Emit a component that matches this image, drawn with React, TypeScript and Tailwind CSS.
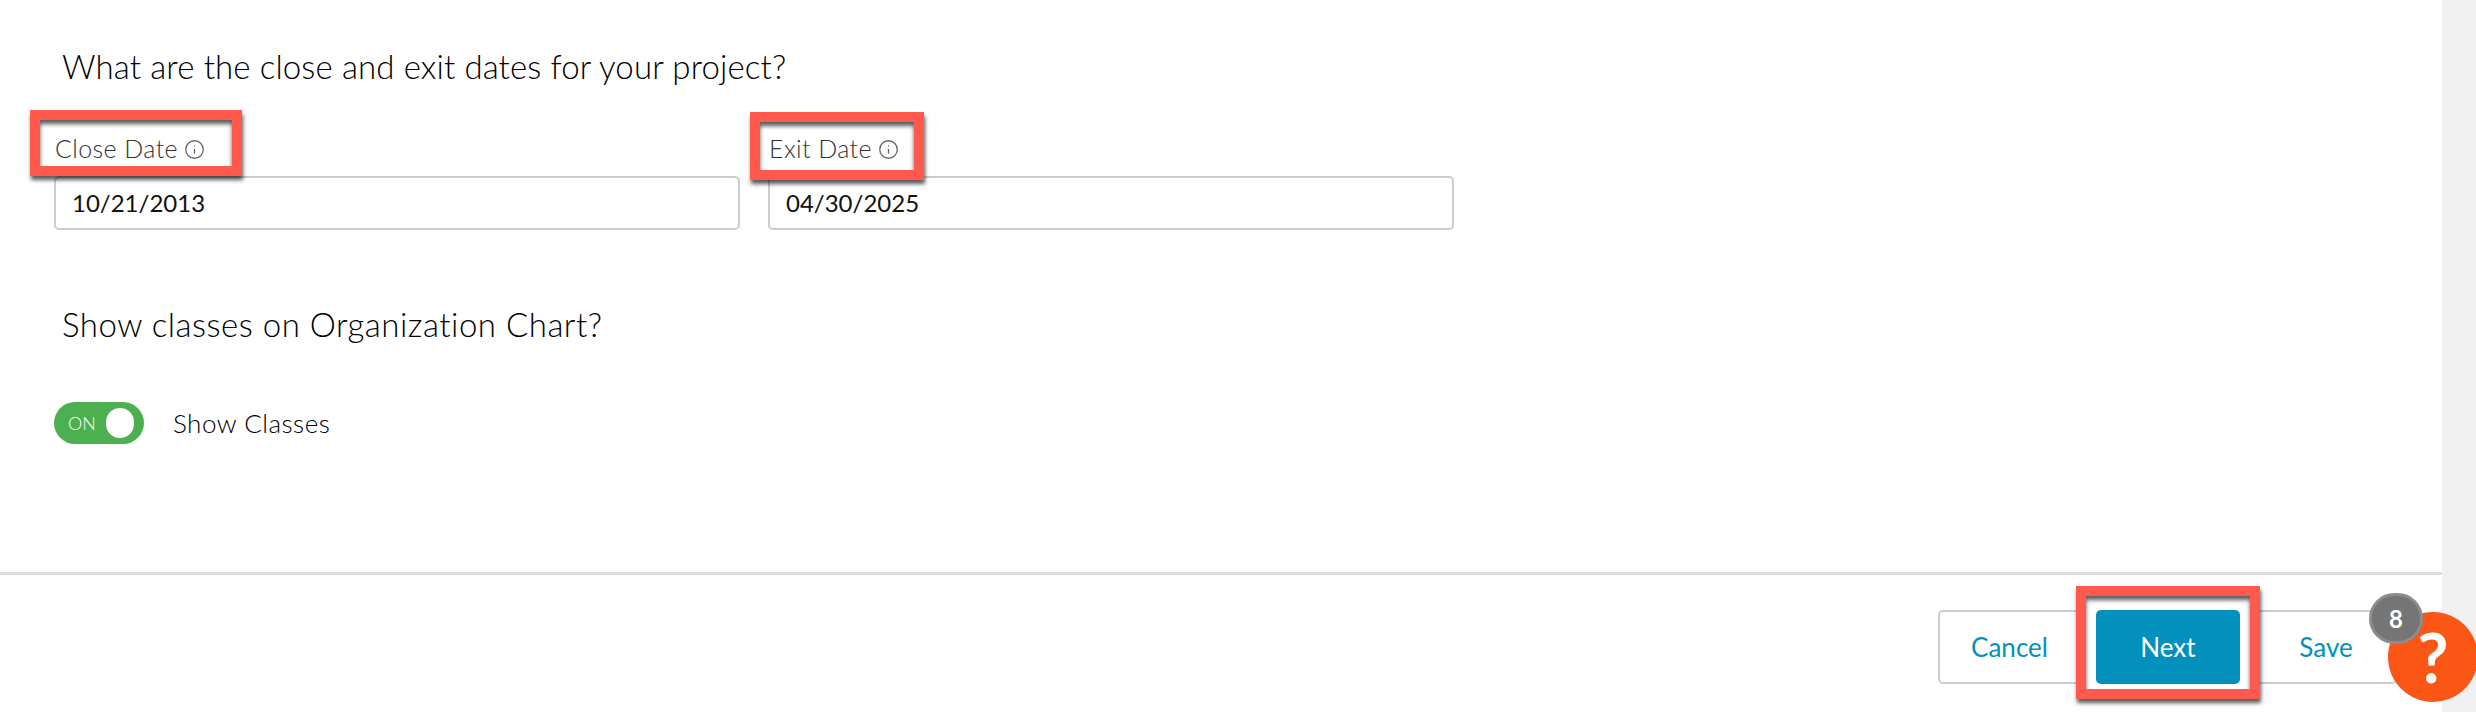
import { Info } from 'lucide-react';

// red annotation frame drawn over the screenshot
function Callout({ className }: { className: string }) {
  return (
    <div
      className={`absolute border-[10px] border-[#ff5a4d] shadow-[1px_4px_4px_rgba(0,0,0,0.65),inset_0_4px_4px_rgba(0,0,0,0.65)] pointer-events-none ${className}`}
    />
  );
}

function DateField({ label, value }: { label: string; value: string }) {
  return (
    <div className="w-[686px]">
      <div className="flex items-center gap-[6px] h-[32px] pl-[1px] text-[25px] tracking-[0.4px] font-light text-[#333333]">
        {label}
        <Info className="w-[21px] h-[21px] text-[#666666]" strokeWidth={1.5} />
      </div>
      <div className="mt-[11px] h-[54px] flex items-center pl-[16px] border-2 border-[#cccccc] rounded-[5px] text-[24px] text-[#111111]">
        {value}
      </div>
    </div>
  );
}

export default function App() {
  return (
    <div className="relative flex w-[2476px] h-[712px] overflow-hidden bg-[#f0f0f0] font-['Lato',sans-serif]">
      <div className="w-[2442px] h-full bg-white flex flex-col">
        <div className="h-[572px] pl-[54px] pt-[46px]">
          <h2 className="ml-[8px] text-[33px] leading-[40px] tracking-[0.12px] font-light text-[#000000]">
            What are the close and exit dates for your project?
          </h2>
          <div className="flex gap-[28px] mt-[47px]">
            <DateField label="Close Date" value="10/21/2013" />
            <DateField label="Exit Date" value="04/30/2025" />
          </div>
          <h2 className="ml-[8px] mt-[74px] text-[33px] leading-[40px] tracking-[0.5px] font-light text-[#000000]">
            Show classes on Organization Chart?
          </h2>
          <div className="flex items-center gap-[29px] mt-[58px]">
            <div className="w-[90px] h-[42px] rounded-full bg-[#4caf50] flex items-center pl-[14px] pr-[10px] justify-between">
              <span className="text-[18px] font-light text-white">ON</span>
              <span className="w-[28px] h-[30px] rounded-full bg-white" />
            </div>
            <span className="text-[26px] tracking-[0.5px] font-light text-[#000000]">Show Classes</span>
          </div>
        </div>
        <div className="flex-1 border-t-[3px] border-[#dddddd] flex justify-end pt-[35px] pr-[45px] gap-[15px]">
          <button className="w-[143px] h-[74px] border-2 border-[#cccccc] rounded-[5px] bg-white text-[26px] text-[#0390bd]">
            Cancel
          </button>
          <button className="w-[144px] h-[74px] rounded-[5px] bg-[#0390bd] text-[26px] text-white">
            Next
          </button>
          <button className="w-[142px] h-[74px] border-2 border-[#cccccc] rounded-[5px] bg-white text-[26px] text-[#0390bd]">
            Save
          </button>
        </div>
      </div>

      <Callout className="left-[30px] top-[110px] w-[212px] h-[66px]" />
      <Callout className="left-[750px] top-[112px] w-[174px] h-[68px]" />
      <Callout className="left-[2076px] top-[586px] w-[184px] h-[113px]" />

      {/* help widget */}
      <div className="absolute left-[2388px] top-[612px] w-[90px] h-[90px] rounded-full bg-[#fa5716] flex items-center justify-center text-white text-[68px] font-bold leading-none">
        ?
      </div>
      <div className="absolute left-[2369px] top-[593px] w-[54px] h-[51px] rounded-full bg-[#757575] border-[3px] border-[#8c8c8c] flex items-center justify-center text-white text-[24px] font-bold">
        8
      </div>
    </div>
  );
}
